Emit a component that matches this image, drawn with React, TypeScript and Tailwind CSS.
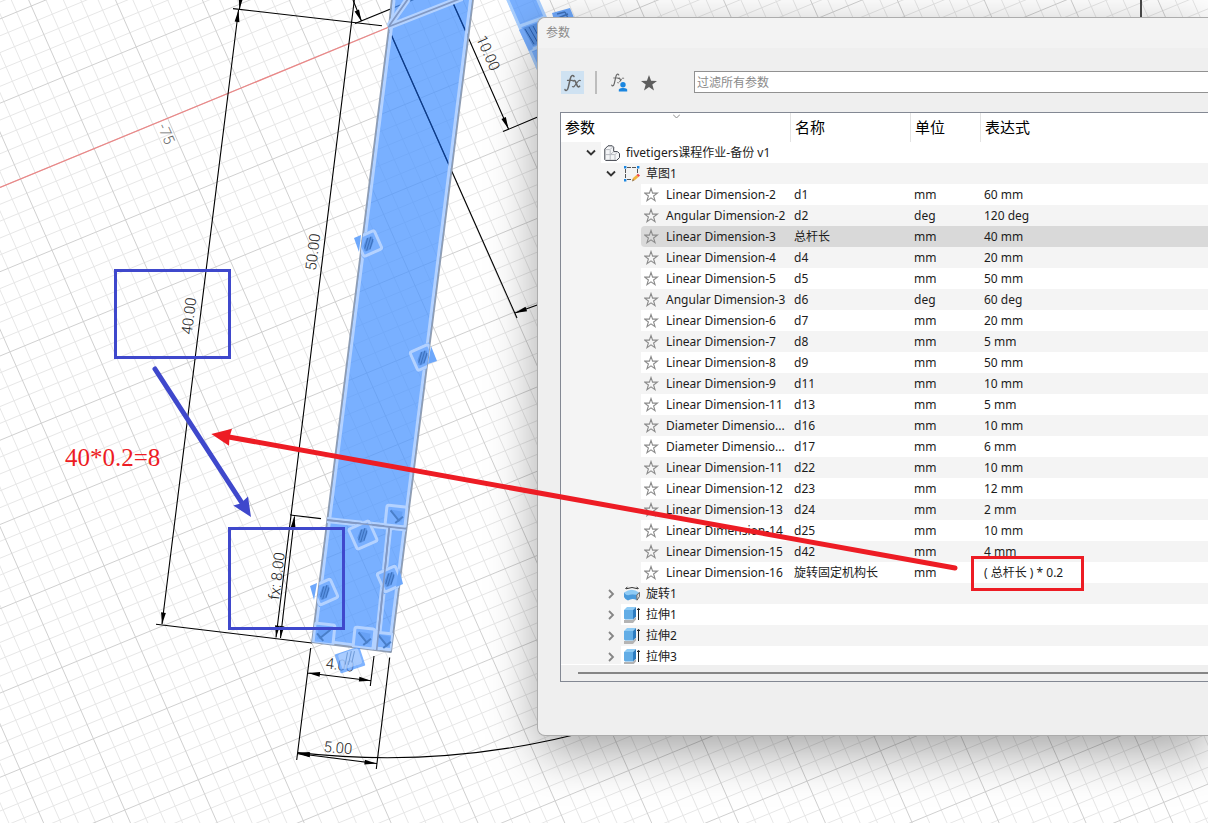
import { useState } from "react";
import type { ReactNode } from "react";

type Kind = "component" | "sketch" | "param" | "revolve" | "extrude";

interface Row {
  level: 1 | 2 | 3;
  kind: Kind;
  label: string;
  open?: boolean;
  name?: string;
  unit?: string;
  expr?: string;
}

const param = (label: string, name: string, expr: string, unit = "mm"): Row => ({
  level: 3,
  kind: "param",
  label,
  name,
  unit,
  expr,
});

const rows: Row[] = [
  { level: 1, kind: "component", label: "fivetigers课程作业-备份 v1", open: true },
  { level: 2, kind: "sketch", label: "草图1", open: true },
  param("Linear Dimension-2", "d1", "60 mm"),
  param("Angular Dimension-2", "d2", "120 deg", "deg"),
  param("Linear Dimension-3", "总杆长", "40 mm"),
  param("Linear Dimension-4", "d4", "20 mm"),
  param("Linear Dimension-5", "d5", "50 mm"),
  param("Angular Dimension-3", "d6", "60 deg", "deg"),
  param("Linear Dimension-6", "d7", "20 mm"),
  param("Linear Dimension-7", "d8", "5 mm"),
  param("Linear Dimension-8", "d9", "50 mm"),
  param("Linear Dimension-9", "d11", "10 mm"),
  param("Linear Dimension-11", "d13", "5 mm"),
  param("Diameter Dimensio...", "d16", "10 mm"),
  param("Diameter Dimensio...", "d17", "6 mm"),
  param("Linear Dimension-11", "d22", "10 mm"),
  param("Linear Dimension-12", "d23", "12 mm"),
  param("Linear Dimension-13", "d24", "2 mm"),
  param("Linear Dimension-14", "d25", "10 mm"),
  param("Linear Dimension-15", "d42", "4 mm"),
  param("Linear Dimension-16", "旋转固定机构长", "( 总杆长 ) * 0.2"),
  { level: 2, kind: "revolve", label: "旋转1" },
  { level: 2, kind: "extrude", label: "拉伸1" },
  { level: 2, kind: "extrude", label: "拉伸2" },
  { level: 2, kind: "extrude", label: "拉伸3" },
];

/* ---------- sketch canvas ---------- */

const ORIGIN = [94.1, 148.6];
const U = [73.5, -30.35];
const V = [31.4, 71.3];

function Grid() {
  const lines: ReactNode[] = [];
  for (const major of [false, true]) {
    for (let i = -120; i <= 120; i++) {
      if ((i % 5 === 0) !== major) continue;
      const t = i / 5;
      const s = 60;
      const stroke = major ? "#d0d0d0" : "#e7e7e7";
      const ax = ORIGIN[0] + U[0] * t;
      const ay = ORIGIN[1] + U[1] * t;
      const bx = ORIGIN[0] + V[0] * t;
      const by = ORIGIN[1] + V[1] * t;
      lines.push(
        <line key={`v${i}`} x1={ax - V[0] * s} y1={ay - V[1] * s} x2={ax + V[0] * s} y2={ay + V[1] * s} stroke={stroke} />,
        <line key={`u${i}`} x1={bx - U[0] * s} y1={by - U[1] * s} x2={bx + U[0] * s} y2={by + U[1] * s} stroke={stroke} />,
      );
    }
  }
  return <g>{lines}</g>;
}

function Arrow({ x, y, angle }: { x: number; y: number; angle: number }) {
  return <path d="M0 0L-12 -2.4V2.4Z" fill="#000" transform={`translate(${x} ${y}) rotate(${angle})`} />;
}

function DimText({ x, y, angle, color = "#222", children }: { x: number; y: number; angle: number; color?: string; children: string }) {
  return (
    <text
      transform={`translate(${x} ${y}) rotate(${angle})`}
      textAnchor="middle"
      dominantBaseline="central"
      fill={color}
      className="font-['Roboto',sans-serif] text-[15px] font-light"
    >
      {children}
    </text>
  );
}

function Hatch({ x, y, angle, size = 23 }: { x: number; y: number; angle: number; size?: number }) {
  const h = size / 2;
  return (
    <g transform={`translate(${x} ${y}) rotate(${angle})`}>
      <rect x={-h} y={-h} width={size} height={size} rx="1" fill="#6ea8fb" />
      <rect x={-h + 1.5} y={-h + 1.5} width={size - 3} height={size - 3} rx="2" fill="#78afff" stroke="#b4d2ff" strokeWidth="3" />
      <path d="M-7 5L-6 0L0 -6L6 -5L5 0L-1 6H-6Z" fill="#5a93e4" />
      <path d="M-6 3L1 -5.5M-5 5.5L4.5 -5.5M-1.5 5.5L5.5 -2.5" stroke="#3c70bd" />
    </g>
  );
}

function Perp({ x, y, size = 20, flip = false }: { x: number; y: number; size?: number; flip?: boolean }) {
  const h = size / 2;
  return (
    <g transform={`translate(${x} ${y}) rotate(6)`}>
      <rect x={-h} y={-h} width={size} height={size} rx="2" fill="#78afff" stroke="#b4d2ff" strokeWidth="3" />
      <g transform={flip ? "scale(-1 1)" : undefined}>
        <path d="M-6 -6L6 -5V6Z" fill="#5c98ee" opacity=".6" />
        <path d="M-6 -5L4 5M0 7L7 0" stroke="#4a7fc9" strokeWidth="2" fill="none" />
      </g>
    </g>
  );
}

const BAR = "391.7,0 473,0 391,652 312,642 389,27";

function Canvas() {
  return (
    <svg className="absolute inset-0 h-full w-full" fill="none" aria-hidden="true">
      <defs>
        <clipPath id="bar">
          <polygon points={BAR} />
        </clipPath>
      </defs>
      <Grid />
      <line x1="0" y1="187.5" x2="388" y2="27.5" stroke="#ec8686" strokeWidth="1.2" />

      {/* second link, partly under the dialog */}
      <polygon points="506,-2 537,-2 575,85 544,85" fill="#4a94ff" fillOpacity=".74" />
      <path d="M507 -2L545 85M537 -2L575 85" stroke="#a9cfff" strokeWidth="3" />
      <path d="M520 26L545 17M531 50L550 42" stroke="#a9cfff" strokeWidth="3" />
      <path d="M519 30L523 28L533 49L529 51Z" fill="#78afff" />
      <path d="M523 28L537 23L542 42L533 46Z" fill="#5a93e4" />
      <path d="M525 29L534 44M529 27L538 43M533 26L541 41" stroke="#2c5fae" />
      <path d="M552 13L570 8L575 20H554Z" fill="#6ea8fb" />
      <path d="M557 14L565 12M558 18L568 14M565 12L568 18" stroke="#3f72bb" strokeWidth="1.4" />

      {/* dimension and extension lines */}
      <g stroke="#000" strokeWidth="1.1">
        <path d="M240.5 0L239.5 9M233 8.6L382 25.7M238.5 10L162 624M156 624.3L312 643" />
        <path d="M354.3 0L276 637.5M294.5 516.5L280.5 638M290 515L321 518.6" />
        <path d="M353 0L361.5 21M355 23.6L415 -1" />
        <path d="M453 3L508.5 129M503 131.6L540 116M390 32L517 318M515 313L540 304" />
        <path d="M310.7 648L296.7 760M374 656L370.3 686M389.7 657.5L376.3 769M308 673L371 680.7M297.5 753.5L376.5 763.5" />
        <path d="M298 752.6A786 786 0 0 0 600 728" />
        <path d="M1141 0V20" strokeWidth="1.4" />
      </g>
      <Arrow x={239.5} y={9} angle={97} />
      <Arrow x={238.5} y={10} angle={-83} />
      <Arrow x={162} y={624.5} angle={97} />
      <Arrow x={276} y={637.5} angle={97} />
      <Arrow x={280.5} y={638} angle={97} />
      <Arrow x={294.5} y={516} angle={-83} />
      <Arrow x={361.5} y={21.5} angle={67} />
      <Arrow x={508.5} y={129} angle={66} />
      <Arrow x={515} y={313} angle={160} />
      <Arrow x={308} y={673} angle={187} />
      <Arrow x={371} y={680.7} angle={7} />
      <Arrow x={297.5} y={753} angle={187} />
      <Arrow x={298} y={754} angle={184} />
      <Arrow x={376.5} y={763.5} angle={7} />

      {/* highlighted link */}
      <polygon points={BAR} fill="#4a94ff" fillOpacity=".74" />
      <path d="M390 32L449.5 166M453 3L467.5 35" stroke="#0d3a86" strokeWidth="1.3" />
      <g strokeLinejoin="round">
        <path d="M394 0L391.5 27L314.5 640L389 649.5L470.5 0" stroke="#b4d2ff" strokeWidth="3" />
        <path d="M391.7 0L389 27L312 642L391 652L473 0" stroke="#8e9db4" strokeWidth="1.8" />
        <path d="M388 27L462 -2M389 26L408 -1M327 520L406 528.5M389.3 527L376.7 650" stroke="#b4d2ff" strokeWidth="6" />
        <path d="M388 27L462 -2M389 26L408 -1M327 520L406 528.5M389.3 527L376.7 650" stroke="#8299c4" strokeWidth="1.8" />
      </g>

      <DimText x={340} y={665} angle={7}>4.00</DimText>
      <g transform="translate(350 660) rotate(-18)">
        <rect x="-13" y="-10" width="26" height="20" rx="1" fill="#4a94ff" opacity=".7" />
        <rect x="-10" y="-9" width="21" height="16" rx="2" fill="#c4dcff" opacity=".6" />
        <path d="M-6 3L0 -8M-3 4L4 -8M1 3L7 -7" stroke="#6f9bd8" />
      </g>

      <g clipPath="url(#bar)">
        <Hatch x={369} y={243.5} angle={-24} />
        <Hatch x={423} y={357.5} angle={-24} />
        <Hatch x={325} y={592} angle={-24} />
        <Hatch x={390} y={579} angle={-24} />
      </g>
      <path d="M354 238L361 235L359 252ZM431 346L437 361L428 364ZM310 586L317 583L314 600ZM399 568L403 584L396 587Z" fill="#6ea8fb" />
      <Hatch x={363} y={535} angle={-24} size={25} />
      <g clipPath="url(#bar)">
        <Perp x={396} y={516} />
        <Perp x={324} y={634} flip />
        <Perp x={364} y={638} />
        <Perp x={384} y={641} size={16} />
        <path d="M326.5 520L406 528.5M389.3 527L376.7 650" stroke="#8299c4" strokeWidth="1.6" />
      </g>

      <DimText x={166} y={134} angle={66} color="#666">-75</DimText>
      <DimText x={488} y={53} angle={66}>10.00</DimText>
      <DimText x={313} y={252} angle={-83}>50.00</DimText>
      <DimText x={189} y={316} angle={-83}>40.00</DimText>
      <DimText x={277} y={576} angle={-83}>fx: 8.00</DimText>
      <DimText x={338} y={748} angle={5}>5.00</DimText>
    </svg>
  );
}

function Annotations() {
  return (
    <svg className="pointer-events-none absolute inset-0 z-20 h-full w-full" fill="none" aria-hidden="true">
      <g stroke="#3f48cc">
        <rect x="115.5" y="270.5" width="114" height="87" strokeWidth="3" />
        <rect x="229.5" y="528.5" width="114" height="100" strokeWidth="3" />
        <path d="M155 369L242 503" strokeWidth="5" strokeLinecap="round" />
      </g>
      <path d="M251 517L233.3 505.6L240.5 503.5L248 496.6Z" fill="#3f48cc" />
      <path d="M955 568L226 436.5" stroke="#ed1c24" strokeWidth="5" strokeLinecap="round" />
      <path d="M211.3 434L232 428.8L229.5 437L229 445.8Z" fill="#ed1c24" />
      <rect x="972.5" y="557.5" width="110" height="32" stroke="#ed1c24" strokeWidth="3" />
      <text x="65" y="466" fill="#ed1c24" className="font-['Liberation_Serif',serif] text-[25px]">
        40*0.2=8
      </text>
    </svg>
  );
}

/* ---------- icons ---------- */

function StarOutline() {
  return (
    <svg className="size-4" viewBox="0 0 16 16" fill="none" stroke="#8a8a8a" strokeWidth="1.1">
      <path d="M7 1.5L8.6 6.1H13.4L9.6 9L11 13.6L7 10.8L3 13.6L4.4 9L.6 6.1H5.4Z" />
    </svg>
  );
}

function ComponentIcon() {
  return (
    <svg className="size-4" viewBox="0 0 16 16" strokeWidth="1">
      <path d="M.8 4L4 .8H8.3L9.7 2.2V6.6H13.4L15.5 8.5V12.6L12.6 15.4H1.6L.8 14.6Z" fill="#f4f5f7" stroke="#3f434c" />
      <path d="M1.4 4.6H5.6L6.2 5.2V15M6 4.7L8.8 1.8M1.2 9.6H10.6L11 10V15M6.4 9.4L9.6 6.8M11 9.6L13.6 7.2" stroke="#b8bbc1" fill="none" />
    </svg>
  );
}

function SketchIcon() {
  return (
    <svg className="size-4" viewBox="0 0 16 16" fill="none">
      <path d="M1.5 3V12.5M13.5 3V8M3 1.5H12.5M3 13.5H8" stroke="#555" strokeDasharray="4 1" />
      <path d="M0 0H2.4V2.4H0ZM13 0H15.4V2.4H13ZM0 13H2.4V15.4H0Z" fill="#1a86e0" />
      <path d="M8 15L9 12L12.5 9L14.5 11L11 14Z" fill="#f3b33d" />
      <path d="M12.5 9L14 7.8L16 9.6L14.5 11Z" fill="#ef4545" />
      <path d="M8 15.5L8.8 12.8L10.5 14.5Z" fill="#9a8060" />
    </svg>
  );
}

function RevolveIcon() {
  return (
    <svg className="size-4" viewBox="0 0 16 16" fill="none">
      <path d="M2 2.8Q8 .2 14 2.8M1.4 3L3.4 .8M14.6 3L12.6 .8" stroke="#333" />
      <path d="M0 6.5Q8 .8 15 6.5L12.6 9.4Q8 7.4 3.4 9.4Z" fill="#8ecbf5" />
      <path d="M0 6.5Q2 9 4 9.2Q8 7.6 12.6 9V14Q8 11.6 4 14.5Q1 13.5 0 11Z" fill="#4a9bdc" />
      <path d="M12.8 9L15.4 6.4V10.6L13 14.2Z" fill="#e9e9e9" stroke="#555" strokeWidth=".9" />
    </svg>
  );
}

function ExtrudeIcon() {
  return (
    <svg className="size-4" viewBox="0 0 16 16" fill="none">
      <path d="M0 13H8.5L12 10V12.5L9 16H0Z" fill="#b4b4b4" />
      <path d="M0 3L3 0H12L9 3Z" fill="#8ecbf5" />
      <path d="M0 3H9V12.6H1L0 11.6Z" fill="#62ade6" />
      <path d="M9 3L12 0V9.5L9 12.6Z" fill="#2d7cc0" />
      <path d="M14.5 2V13M13.2 3L14.5 1.2L15.8 3" stroke="#222" />
    </svg>
  );
}

const icons: Record<Kind, () => ReactNode> = {
  component: ComponentIcon,
  sketch: SketchIcon,
  param: StarOutline,
  revolve: RevolveIcon,
  extrude: ExtrudeIcon,
};

/* Italic function mark drawn with thin strokes */
function FxGlyph({ className }: { className: string }) {
  return (
    <svg className={className} viewBox="0 0 18 18" fill="none" stroke="#666" strokeLinecap="round">
      <path d="M10 2.6Q9.4 1 8 1.6Q6.8 2.2 6.2 5L4.2 13.6Q3.6 16.4 2.2 16.6Q1.2 16.6 1 15.6" strokeWidth="1.5" />
      <path d="M3.4 6.4H8.4" strokeWidth="1.1" />
      <path d="M9.2 7Q10.6 5.8 11.4 7.4L13.4 12.2Q14.2 13.6 15.6 12.2" strokeWidth="1.6" />
      <path d="M16.4 6.6Q15 5.8 13.8 7.6L10.8 11.6Q9.6 13.4 8.4 12.6" strokeWidth="1.1" />
    </svg>
  );
}

function FxUserIcon() {
  return (
    <span className="relative block size-5">
      <FxGlyph className="absolute top-0 left-px size-[14px]" />
      <svg className="absolute inset-0 size-5" viewBox="0 0 20 20">
        <circle cx="13" cy="11.5" r="3.8" fill="#efefef" />
        <circle cx="13" cy="11.7" r="2.7" fill="#1a86e0" />
        <path d="M8.8 18.5V16.5Q9.5 15 12 15H14Q16.8 15 17.2 16.5V18.5Z" fill="#1a86e0" />
      </svg>
    </span>
  );
}

/* ---------- dialog ---------- */

const indent = { 1: "pl-[20px]", 2: "pl-[40px]", 3: "pl-[80px]" };

function TableRow({ row, striped, selected, onSelect }: { row: Row; striped: boolean; selected: boolean; onSelect: () => void }) {
  const Icon = icons[row.kind];
  const bg = selected ? "bg-[#d9d9d9]" : striped ? "bg-[#f4f4f4]" : "bg-white";
  return (
    <tr className="h-[21px]" onClick={onSelect}>
      <td className="bg-[#f4f4f4] p-0">
        <div className={`flex h-[21px] items-stretch ${indent[row.level]}`}>
          {row.level < 3 && (
            <button type="button" className="flex w-5 items-center justify-center" aria-label={row.open ? "折叠" : "展开"}>
              <svg className="size-[10px]" viewBox="0 0 10 10" fill="none" strokeWidth="1.8">
                {row.open ? <path d="M1 2.5L5 6.5L9 2.5" stroke="#333" /> : <path d="M3 1L7 5L3 9" stroke="#858585" />}
              </svg>
            </button>
          )}
          <div className={`flex min-w-0 flex-1 items-center gap-[6px] pl-[3px] ${bg} ${selected ? "rounded-l-sm" : ""}`}>
            {row.kind === "param" ? (
              <button type="button" aria-label="收藏" className="shrink-0">
                <Icon />
              </button>
            ) : (
              <span className="shrink-0">
                <Icon />
              </span>
            )}
            <span className="whitespace-nowrap">{row.label}</span>
          </div>
        </div>
      </td>
      <td className={`p-0 pl-1 whitespace-nowrap ${bg}`}>{row.name}</td>
      <td className={`p-0 pl-1 whitespace-nowrap ${bg}`}>{row.unit}</td>
      <td className={`p-0 pl-1 whitespace-nowrap ${bg}`}>{row.expr}</td>
    </tr>
  );
}

export default function App() {
  const [selected, setSelected] = useState(4);
  const [filter, setFilter] = useState("");
  return (
    <main className="relative min-h-screen overflow-hidden bg-white pt-[17px] pl-[537px] font-['Noto_Sans','Noto_Sans_CJK_SC',sans-serif] text-[12px] text-[#1c1c1c]">
      <Canvas />
      <section
        role="dialog"
        aria-labelledby="dialog-title"
        className="relative z-10 rounded-l-lg border border-r-0 border-[#acacac] bg-[#efefef] pb-[53px] shadow-[0_16px_50px_rgba(0,0,0,0.36)]"
      >
        <header className="flex h-[30px] items-center rounded-tl-lg bg-[#f3f3f3] pl-2">
          <h1 id="dialog-title" className="text-[12px] leading-4 text-[#8a8a8a]">
            参数
          </h1>
        </header>

        <div className="mt-[23px] flex h-[23px] items-center pl-[23px]">
          <button type="button" aria-label="所有参数" aria-pressed="true" className="flex size-[23px] items-center justify-center bg-[#cfe2f2]">
            <FxGlyph className="size-[18px]" />
          </button>
          <span className="ml-[11px] h-[23px] w-[2px] bg-[#bdbdbd]" />
          <button type="button" aria-label="用户参数" className="ml-[13px]">
            <FxUserIcon />
          </button>
          <button type="button" aria-label="收藏夹" className="ml-[10px]">
            <svg className="size-[18px]" viewBox="0 0 18 18" fill="#5e5e5e">
              <path d="M9 1L11.1 6.7L17 6.9L12.3 10.6L14 16.5L9 13.1L4 16.5L5.7 10.6L1 6.9L6.9 6.7Z" />
            </svg>
          </button>
          <input
            aria-label="过滤所有参数"
            value={filter}
            onChange={(e) => setFilter(e.target.value)}
            placeholder="过滤所有参数"
            className="ml-9 h-[22px] min-w-0 flex-1 self-start border border-r-0 border-[#919191] bg-white px-[2px] outline-none placeholder:text-[#8a8a8a]"
          />
        </div>

        <div className="mt-[18px] ml-[22px] border border-r-0 border-[#838893]">
          <div className="h-[551px] overflow-hidden">
            <table className="w-full table-fixed border-separate border-spacing-0">
              <colgroup>
                <col className="w-[229px]" />
                <col className="w-[120px]" />
                <col className="w-[70px]" />
                <col />
              </colgroup>
              <thead>
                <tr className="h-[29px] bg-white text-left text-[15px] leading-5 text-black">
                  <th className="relative p-0 pb-[2px] pl-1 font-normal">
                    参数
                    <svg className="absolute top-0 left-[112px] size-[7px]" viewBox="0 0 7 7" fill="none" stroke="#8a8a8a">
                      <path d="M0 1.5L3.5 5L7 1.5" />
                    </svg>
                  </th>
                  <th className="border-l border-[#e3e3e3] p-0 pb-[2px] pl-1 font-normal">名称</th>
                  <th className="border-l border-[#e3e3e3] p-0 pb-[2px] pl-1 font-normal">单位</th>
                  <th className="border-l border-[#e3e3e3] p-0 pb-[2px] pl-1 font-normal">表达式</th>
                </tr>
              </thead>
              <tbody>
                {rows.map((row, i) => (
                  <TableRow key={i} row={row} striped={i % 2 === 1} selected={i === selected} onSelect={() => setSelected(i)} />
                ))}
              </tbody>
            </table>
          </div>
          <div className="h-[17px] border-t border-white pt-[7px] pl-[17px]">
            <div className="h-[2px] bg-[#858585]" />
          </div>
        </div>
      </section>
      <Annotations />
    </main>
  );
}
